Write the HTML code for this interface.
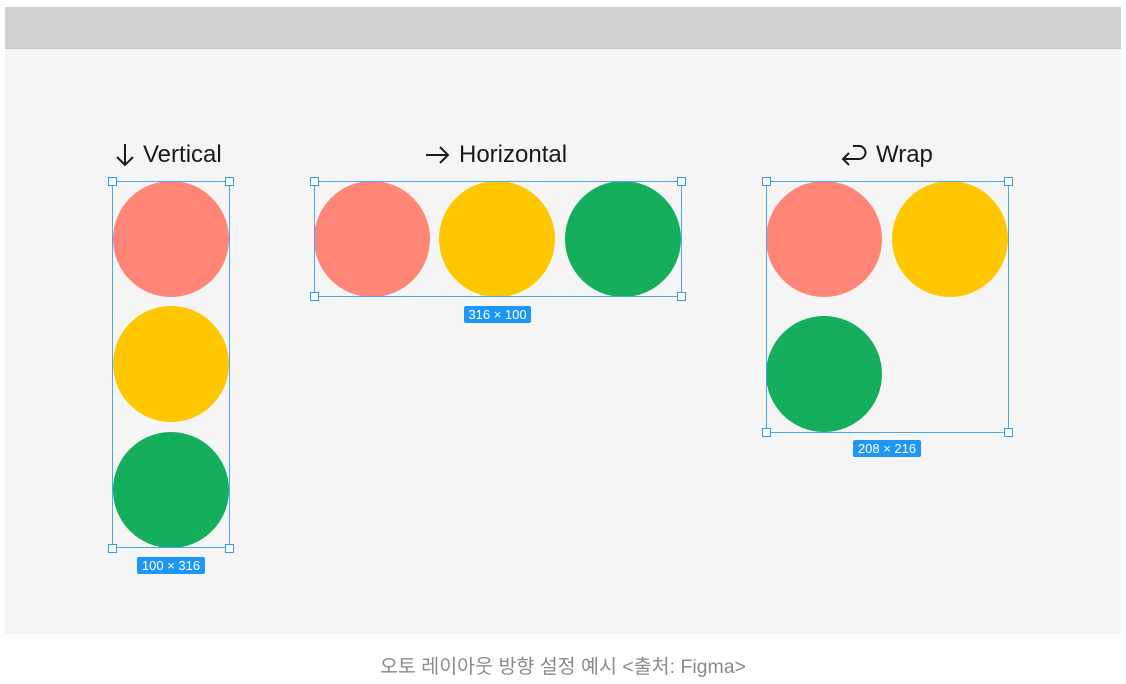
<!DOCTYPE html>
<html><head><meta charset="utf-8"><style>
html,body{margin:0;padding:0;background:#fff;width:1126px;height:684px;overflow:hidden;font-family:"Liberation Sans","Noto Sans CJK KR",sans-serif}
.canvas{position:absolute;left:5px;top:7px;width:1116px;height:627px;background:#f5f5f5}
.bar{position:absolute;left:5px;top:7px;width:1116px;height:41px;background:#d0d0d0;border-bottom:1px solid #c4c4c4}
.c{position:absolute;width:116px;height:116px;border-radius:50%}
.r{background:#ff8577}.y{background:#ffc700}.g{background:#14ae5c}
.box{position:absolute;border:1px solid #4aa8f0;box-sizing:border-box}
.h{position:absolute;width:7px;height:7px;border:1px solid #2d9af0;background:#fff}
.tag{position:absolute;background:#1e96f5;color:#fff;font-size:13px;line-height:17px;height:17px;border-radius:2px;text-align:center}
.t{position:absolute;font-size:24px;color:#1a1a1a;line-height:28px;white-space:nowrap}
.cap{position:absolute;left:0;width:1126px;top:650px;text-align:center;color:#8a8a8a;font-size:19.5px}
svg{position:absolute}
</style></head><body>
<div class="canvas"></div><div class="bar"></div>

<svg style="left:114px;top:142px" width="22" height="26" viewBox="0 0 22 26"><path d="M11 2 V23 M3 15 L11 23 L19 15" fill="none" stroke="#1a1a1a" stroke-width="2"/></svg>
<div class="t" style="left:143px;top:141px">Vertical</div>
<svg style="left:424px;top:143px" width="26" height="24" viewBox="0 0 26 24"><path d="M2 12 H24 M16 4 L24 12 L16 20" fill="none" stroke="#1a1a1a" stroke-width="2"/></svg>
<div class="t" style="left:459px;top:141px">Horizontal</div>
<svg style="left:840px;top:143px" width="28" height="24" viewBox="0 0 28 24"><path d="M13 3 H19 A6.5 6.5 0 0 1 19 16 H3 M9 10 L3 16 L9 22" fill="none" stroke="#1a1a1a" stroke-width="2"/></svg>
<div class="t" style="left:876px;top:141px">Wrap</div>

<div class="c r" style="left:113px;top:181px"></div>
<div class="c y" style="left:113px;top:306px"></div>
<div class="c g" style="left:113px;top:432px"></div>
<div class="box" style="left:112px;top:181px;width:118px;height:367px"></div>
<div class="h" style="left:108px;top:177px"></div><div class="h" style="left:225px;top:177px"></div>
<div class="h" style="left:108px;top:544px"></div><div class="h" style="left:225px;top:544px"></div>
<div class="tag" style="left:137px;top:557px;width:68px">100 × 316</div>

<div class="c r" style="left:314px;top:181px"></div>
<div class="c y" style="left:439px;top:181px"></div>
<div class="c g" style="left:565px;top:181px"></div>
<div class="box" style="left:314px;top:181px;width:368px;height:116px"></div>
<div class="h" style="left:310px;top:177px"></div><div class="h" style="left:677px;top:177px"></div>
<div class="h" style="left:310px;top:292px"></div><div class="h" style="left:677px;top:292px"></div>
<div class="tag" style="left:464px;top:306px;width:67px">316 × 100</div>

<div class="c r" style="left:766px;top:181px"></div>
<div class="c y" style="left:892px;top:181px"></div>
<div class="c g" style="left:766px;top:316px"></div>
<div class="box" style="left:766px;top:181px;width:243px;height:252px"></div>
<div class="h" style="left:762px;top:177px"></div><div class="h" style="left:1004px;top:177px"></div>
<div class="h" style="left:762px;top:428px"></div><div class="h" style="left:1004px;top:428px"></div>
<div class="tag" style="left:853px;top:440px;width:68px">208 × 216</div>

<div class="cap">오토 레이아웃 방향 설정 예시 &lt;출처: Figma&gt;</div>
</body></html>
